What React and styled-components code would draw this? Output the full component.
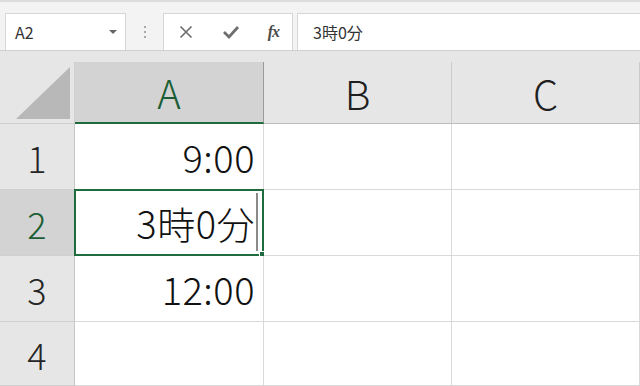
import styled, { createGlobalStyle } from "styled-components";

const GlobalStyle = createGlobalStyle`
  html, body {
    margin: 0;
    padding: 0;
    background: #e6e6e6;
    overflow: hidden;
  }
  body {
    font-family: "Noto Sans CJK JP", "Noto Sans", sans-serif;
  }
`;

const Page = styled.div`
  width: 640px;
  height: 386px;
  display: flex;
  flex-direction: column;
  overflow: hidden;
`;

const FormulaBar = styled.div`
  height: 51px;
  box-sizing: border-box;
  background: #f3f3f3;
  border-top: 2px solid #dcdcdc;
  border-bottom: 1px solid #d0d0d0;
  display: flex;
  align-items: flex-end;
  padding-left: 5px;
`;

const NameBox = styled.div`
  width: 121px;
  height: 37px;
  box-sizing: border-box;
  background: #fff;
  border: 1px solid #d6d6d6;
  border-bottom: none;
  display: flex;
  align-items: center;
  justify-content: space-between;
  padding: 0 8px 0 9px;
  font-size: 16px;
  color: #333;
`;

const Caret = styled.span`
  width: 0;
  height: 0;
  border-left: 4px solid transparent;
  border-right: 4px solid transparent;
  border-top: 4px solid #666;
`;

const Dots = styled.div`
  width: 37px;
  height: 37px;
  display: flex;
  flex-direction: column;
  align-items: center;
  justify-content: center;
  gap: 3px;

  span {
    width: 2px;
    height: 2px;
    background: #a8a8a8;
  }
`;

const ButtonGroup = styled.div`
  width: 130px;
  height: 37px;
  box-sizing: border-box;
  background: #fff;
  border: 1px solid #d6d6d6;
  border-bottom: none;
  display: flex;
  align-items: center;
  justify-content: space-between;
  padding: 0 13px 0 14px;
`;

const FxLabel = styled.span`
  font-family: "Liberation Serif", "DejaVu Serif", serif;
  font-style: italic;
  font-weight: bold;
  font-size: 16px;
  color: #4a4a4a;
  letter-spacing: -1px;
`;

const FormulaInput = styled.div`
  flex: 1;
  height: 37px;
  margin-left: 4px;
  box-sizing: border-box;
  background: #fff;
  border: 1px solid #d6d6d6;
  border-right: none;
  border-bottom: none;
  display: flex;
  align-items: center;
  padding-left: 15px;
  font-size: 16px;
  color: #333;
`;

const Sheet = styled.div`
  flex: 1;
  padding-top: 11px;
  display: grid;
  grid-template-columns: 75px 189px 188px 1fr;
  grid-template-rows: 62px 66px 66px 66px 1fr;
`;

const Corner = styled.div`
  background: #e6e6e6;
  border-right: 1px solid #cfcfcf;
  border-bottom: 1px solid #cfcfcf;
  display: flex;
  align-items: flex-end;
  justify-content: flex-end;
  padding: 0 4px 4px 0;
`;

const ColHeader = styled.div`
  background: ${({ $active }) => ($active ? "#d3d3d3" : "#e6e6e6")};
  border-right: 1px solid ${({ $active }) => ($active ? "#9b9b9b" : "#cbcbcb")};
  border-bottom: ${({ $active }) =>
    $active ? "2px solid #1e6b3d" : "1px solid #bdbdbd"};
  display: flex;
  align-items: center;
  justify-content: center;
  font-size: 40px;
  font-weight: 300;
  color: ${({ $active }) => ($active ? "#1b5e35" : "#1f1f1f")};
`;

const RowHeader = styled.div`
  background: ${({ $active }) => ($active ? "#d3d3d3" : "#e6e6e6")};
  border-right: 1px solid #c6c6c6;
  border-bottom: 1px solid #d0d0d0;
  display: flex;
  align-items: center;
  justify-content: center;
  font-size: 36px;
  font-weight: 300;
  color: ${({ $active }) => ($active ? "#1b5e35" : "#262626")};
`;

const Cell = styled.div`
  position: relative;
  background: #fff;
  border-right: 1px solid #d9d9d9;
  border-bottom: 1px solid #d9d9d9;
  display: flex;
  align-items: center;
  justify-content: flex-end;
  padding-right: 8px;
  font-size: 38px;
  font-weight: 300;
  letter-spacing: 0.5px;
  color: #111;
`;

const Selection = styled.div`
  position: absolute;
  inset: -1px -1px -1px -1px;
  border: 2px solid #1e6b3d;
  pointer-events: none;
`;

const FillHandle = styled.div`
  position: absolute;
  right: -4px;
  bottom: -4px;
  width: 5px;
  height: 5px;
  background: #1e6b3d;
  border: 1px solid #fff;
`;

const TextCursor = styled.div`
  position: absolute;
  right: 4px;
  top: 2px;
  bottom: 3px;
  width: 2px;
  background: #8a8a8a;
`;

function CancelIcon() {
  return (
    <svg width="16" height="16" viewBox="0 0 16 16">
      <path d="M2.5 2.5 L13.5 13.5 M13.5 2.5 L2.5 13.5" stroke="#6e6e6e" strokeWidth="1.7" />
    </svg>
  );
}

function EnterIcon() {
  return (
    <svg width="18" height="16" viewBox="0 0 18 16">
      <path
        d="M2 8 L7 13 L16 3"
        stroke="#6e6e6e"
        strokeWidth="2.8"
        fill="none"
      />
    </svg>
  );
}

function CornerTriangle() {
  return (
    <svg width="54" height="52" viewBox="0 0 54 52">
      <polygon points="0,52 54,52 54,0" fill="#b8b8b8" />
    </svg>
  );
}

const rows = [
  { n: 1, a: "9:00" },
  { n: 2, a: "3時0分", active: true },
  { n: 3, a: "12:00" },
  { n: 4, a: "" },
];

export default function App() {
  return (
    <Page>
      <GlobalStyle />
      <FormulaBar>
        <NameBox>
          A2
          <Caret />
        </NameBox>
        <Dots>
          <span />
          <span />
          <span />
        </Dots>
        <ButtonGroup>
          <CancelIcon />
          <EnterIcon />
          <FxLabel>fx</FxLabel>
        </ButtonGroup>
        <FormulaInput>3時0分</FormulaInput>
      </FormulaBar>
      <Sheet>
        <Corner>
          <CornerTriangle />
        </Corner>
        <ColHeader $active>A</ColHeader>
        <ColHeader>B</ColHeader>
        <ColHeader>C</ColHeader>
        {rows.map((row) => (
          <>
            <RowHeader key={`h${row.n}`} $active={row.active}>
              {row.n}
            </RowHeader>
            <Cell key={`a${row.n}`}>
              {row.a}
              {row.active && (
                <Selection>
                  <TextCursor />
                  <FillHandle />
                </Selection>
              )}
            </Cell>
            <Cell key={`b${row.n}`} />
            <Cell key={`c${row.n}`} />
          </>
        ))}
      </Sheet>
    </Page>
  );
}
